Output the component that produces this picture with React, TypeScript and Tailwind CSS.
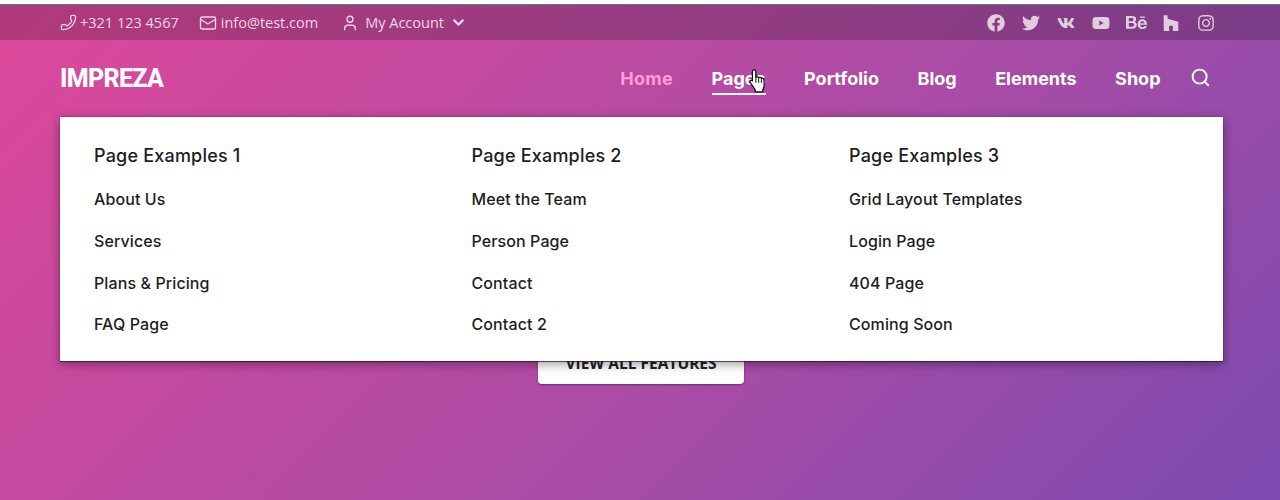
import { ChevronDown, Mail, Phone, Search, User } from "lucide-react";
import { FaBehance, FaFacebook, FaHouzz, FaInstagram, FaTwitter, FaVk, FaYoutube } from "react-icons/fa";

const columns = [
  { title: "Page Examples 1", links: ["About Us", "Services", "Plans & Pricing", "FAQ Page"] },
  { title: "Page Examples 2", links: ["Meet the Team", "Person Page", "Contact", "Contact 2"] },
  { title: "Page Examples 3", links: ["Grid Layout Templates", "Login Page", "404 Page", "Coming Soon"] },
];

const navItems = ["Portfolio", "Blog", "Elements", "Shop"];

function HandCursor() {
  return (
    <svg viewBox="0 0 16 22" className="absolute left-[36px] top-[3px] h-[25px] w-[19px]">
      <path
        d="M5 1.600c.9 0 1.500.7 1.500 1.600v5.200c.5-.8 2.200-.7 2.500.3.6-.7 2.100-.5 2.400.5.8-.5 2.200 0 2.300 1.200l.2 4.500c0 2-.6 3.300-1.300 4.600v1.400H6v-1.600C4.800 17 2.900 15 1.500 12.600c-.7-1.200.6-2.400 1.700-1.500l.3.300V3.200c0-.9.600-1.600 1.500-1.600z"
        fill="#fff"
        stroke="#111"
        strokeWidth="1.100"
        strokeLinejoin="round"
      />
      <path d="M6.500 9v4M9 9v4M11.400 10v3" stroke="#111" strokeWidth=".9" />
    </svg>
  );
}

export default function App() {
  return (
    <div className="relative h-[500px] w-[1280px] overflow-hidden bg-white font-['Inter',sans-serif]">
      <div className="h-[4px] bg-white" />
      <div className="h-[496px] border-t border-t-[#4f8296] bg-[linear-gradient(135deg,#de489a_0%,#a84ca6_60%,#7c4ab0_100%)]">
        {/* top bar */}
        <div className="flex h-[35px] items-center justify-between bg-black/20 pl-[60px] pr-[65px] font-['Open_Sans',sans-serif] text-[14.5px] text-[#f0d5e6]">
          <div className="flex items-center">
            <span className="flex items-center gap-[3px]">
              <Phone size={17} strokeWidth={1.8} className="-scale-x-100" />
              +321 123 4567
            </span>
            <span className="ml-[20px] flex items-center gap-[4px]">
              <Mail size={18} strokeWidth={1.8} />
              info@test.com
            </span>
            <span className="ml-[23px] flex items-center gap-[6px]">
              <User size={18} strokeWidth={1.8} />
              <span className="mr-[2px]">My Account</span>
              <ChevronDown size={17} strokeWidth={3} className="-ml-[2px]" />
            </span>
          </div>
          <div className="flex items-center gap-[17px] text-[18px] text-[#e0cde0]">
            <FaFacebook />
            <FaTwitter />
            <FaVk />
            <FaYoutube />
            <FaBehance className="-mx-[1.500px] text-[21px]" />
            <FaHouzz />
            <FaInstagram />
          </div>
        </div>

        {/* main nav */}
        <div className="flex h-[77px] items-center justify-between pl-[60px] pr-[69px]">
          <span className="font-['Roboto',sans-serif] text-[25px] font-extrabold tracking-[-0.7px] text-white">IMPREZA</span>
          <nav className="flex items-center gap-[38.500px] text-[18px] font-bold text-white">
            <span className="tracking-[0.3px] text-[#ff9ed2]">Home</span>
            <span className="relative">
              Pages
              <span className="absolute inset-x-0 bottom-[-3px] h-[2px] bg-white" />
              <HandCursor />
            </span>
            {navItems.map((item) => (
              <span key={item}>{item}</span>
            ))}
            <Search size={21} strokeWidth={2.2} className="-ml-[9px] -mt-[2px]" />
          </nav>
        </div>

        {/* partly hidden section behind the menu */}
        <div className="mt-[211px] flex justify-center pl-[2px]">
          <button className="h-[56px] w-[206px] rounded-[4px] bg-white pt-[15px] font-['Open_Sans',sans-serif] text-[15.500px] font-bold text-[#222] shadow-[0_1px_2px_rgba(60,0,80,0.5)]">
            VIEW ALL FEATURES
          </button>
        </div>
      </div>

      {/* dropdown */}
      <div className="absolute left-[60px] top-[117px] grid h-[244px] w-[1163px] grid-cols-[377.500px_377.500px_1fr] bg-white pl-[34px] pt-[27px] shadow-[0_0_1px_rgba(60,10,80,0.8),0_1px_0_rgba(50,10,70,0.7),0_3px_10px_rgba(0,0,0,0.4)]">
        {columns.map((col) => (
          <div key={col.title}>
            <h3 className="text-[18px] font-medium leading-[24px] tracking-[0.2px] text-[#1d1d22]">{col.title}</h3>
            <ul className="mt-[19px] flex flex-col gap-[17.800px]">
              {col.links.map((link) => (
                <li key={link} className="text-[16px] font-medium leading-[24px] tracking-[0.1px] text-[#1d1d22]">
                  {link}
                </li>
              ))}
            </ul>
          </div>
        ))}
      </div>
    </div>
  );
}
